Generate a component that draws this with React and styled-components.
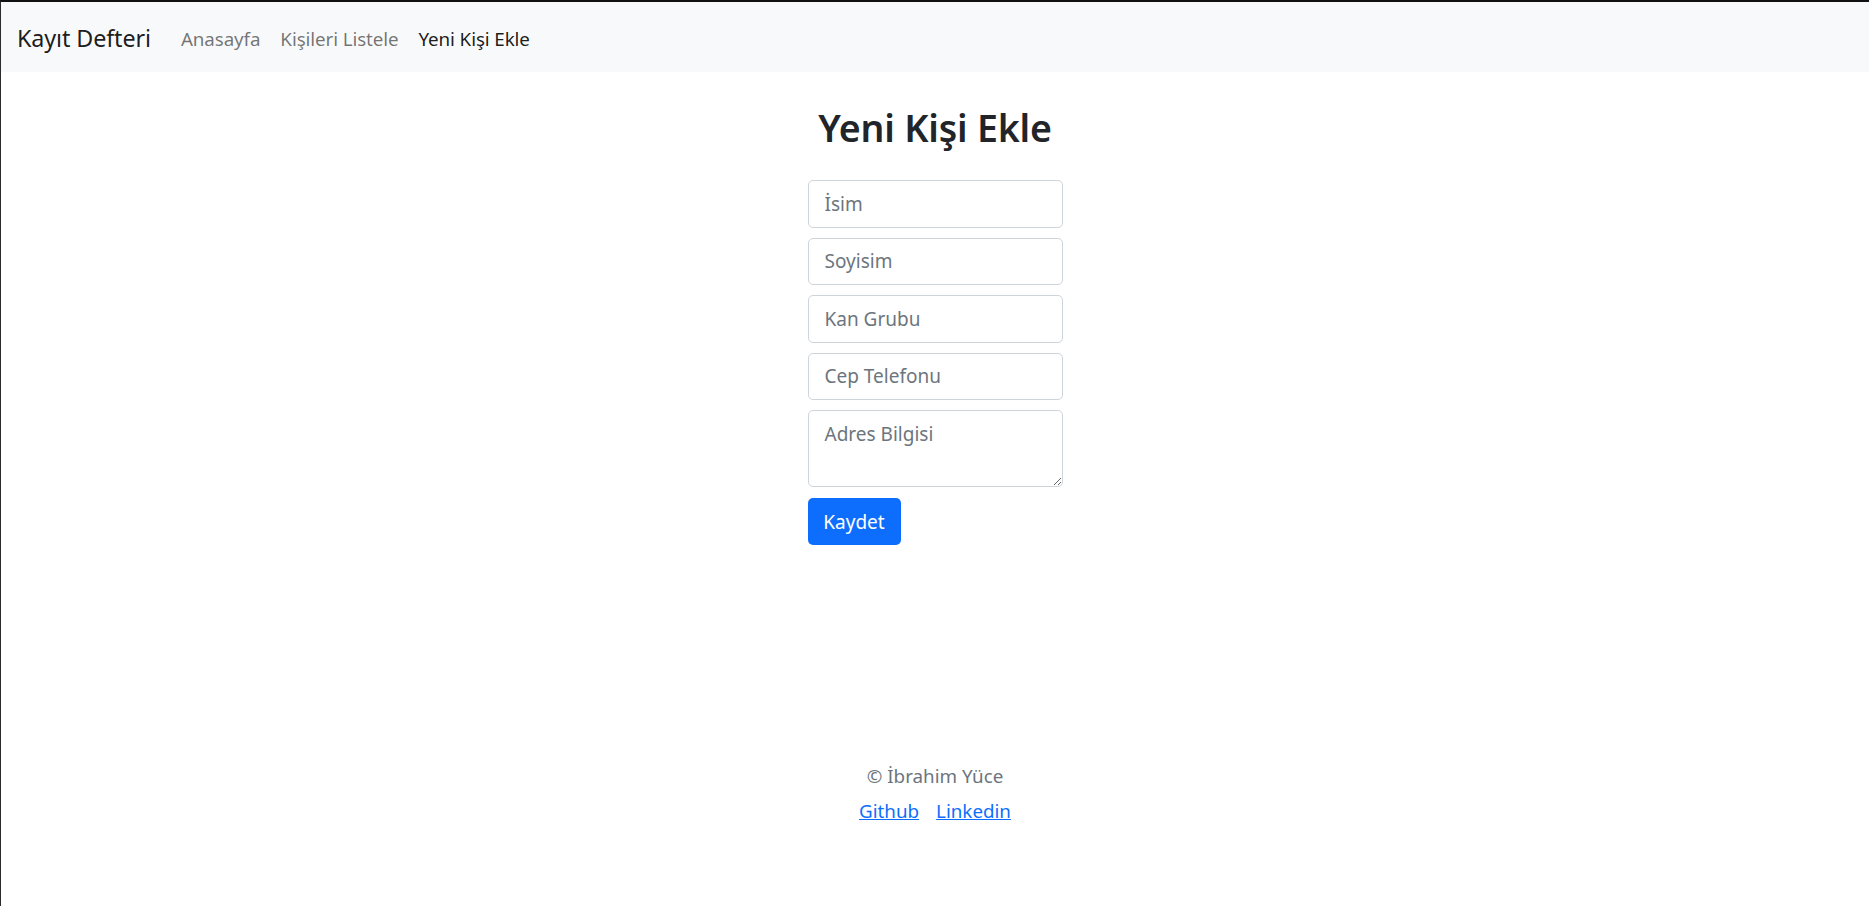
import React from 'react';
import styled, { createGlobalStyle } from 'styled-components';

const GlobalStyle = createGlobalStyle`
  * { box-sizing: border-box; }
  html, body { margin: 0; padding: 0; }
  body {
    font-family: "Noto Sans", "Open Sans", sans-serif;
    color: #212529;
    background: #fff;
  }
`;

const Page = styled.div`
  min-height: 100vh;
  display: flex;
  flex-direction: column;
  border-top: 2px solid #111;
  border-left: 1px solid #2b2b2b;
`;

const Navbar = styled.nav`
  height: 70px;
  background: #f8f9fa;
  display: flex;
  align-items: center;
  padding: 3px 16px 0;
`;

const Brand = styled.a`
  font-size: 23.3px;
  letter-spacing: -0.1px;
  color: rgba(0, 0, 0, 0.9);
  text-decoration: none;
  margin-right: 20px;
  margin-top: -1px;
`;

const NavLinks = styled.div`
  display: flex;
`;

const NavLink = styled.a`
  font-size: 18.8px;
  letter-spacing: -0.1px;
  padding: 0 10px;
  text-decoration: none;
  color: ${p => (p.$active ? 'rgba(0,0,0,0.9)' : 'rgba(0,0,0,0.55)')};
`;

const Main = styled.main`
  flex: 1;
  display: flex;
  flex-direction: column;
  align-items: center;
`;

const Title = styled.h2`
  margin: 32px 0 28px;
  font-size: 37.5px;
  letter-spacing: -0.2px;
  line-height: 48px;
  font-weight: 600;
  color: #212529;
`;

const Form = styled.form`
  width: 255px;
  display: flex;
  flex-direction: column;
  gap: 10px;
`;

const Input = styled.input`
  height: 47.5px;
  width: 100%;
  border: 1px solid #ced4da;
  border-radius: 5px;
  padding: 0 16px;
  font-family: inherit;
  font-size: 19px;
  color: #212529;
  &::placeholder { color: #6c757d; }
`;

const TextArea = styled.textarea`
  height: 77px;
  width: 100%;
  border: 1px solid #ced4da;
  border-radius: 5px;
  padding: 8px 16px;
  font-family: inherit;
  font-size: 19px;
  line-height: 30px;
  color: #212529;
  &::placeholder { color: #6c757d; }
`;

const Button = styled.button`
  align-self: flex-start;
  margin-top: 1px;
  height: 47px;
  width: 93px;
  padding: 0;
  border: none;
  border-radius: 5px;
  background: #0d6efd;
  color: #fff;
  font-family: inherit;
  font-size: 19px;
`;

const Footer = styled.footer`
  display: flex;
  flex-direction: column;
  align-items: center;
  gap: 5px;
  padding-bottom: 80px;
  font-size: 18.8px;
  line-height: 30px;
  color: #6c757d;
`;

const FooterLinks = styled.div`
  display: flex;
  gap: 17px;
`;

const FooterLink = styled.a`
  color: #0d6efd;
  text-decoration: underline;
`;

export default function App() {
  return (
    <>
      <GlobalStyle />
      <Page>
        <Navbar>
          <Brand href="#">Kayıt Defteri</Brand>
          <NavLinks>
            <NavLink href="#">Anasayfa</NavLink>
            <NavLink href="#">Kişileri Listele</NavLink>
            <NavLink href="#" $active>Yeni Kişi Ekle</NavLink>
          </NavLinks>
        </Navbar>
        <Main>
          <Title>Yeni Kişi Ekle</Title>
          <Form onSubmit={e => e.preventDefault()}>
            <Input placeholder="İsim" />
            <Input placeholder="Soyisim" />
            <Input placeholder="Kan Grubu" />
            <Input placeholder="Cep Telefonu" />
            <TextArea placeholder="Adres Bilgisi" />
            <Button type="submit">Kaydet</Button>
          </Form>
        </Main>
        <Footer>
          <span>© İbrahim Yüce</span>
          <FooterLinks>
            <FooterLink href="#">Github</FooterLink>
            <FooterLink href="#">Linkedin</FooterLink>
          </FooterLinks>
        </Footer>
      </Page>
    </>
  );
}
